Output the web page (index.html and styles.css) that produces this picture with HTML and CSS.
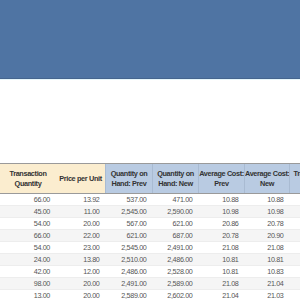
FILE: index.html
```html
<!DOCTYPE html>
<html lang="en">
<head>
    <meta charset="UTF-8">
    <title>Inventory Transactions</title>
    <link rel="stylesheet" href="styles.css">
</head>
<body>
    <div class="topbar"></div>

    <div class="grid-wrap">
        <table class="grid">
            <thead>
                <tr>
                    <th class="tx">Transaction<br>Quantity</th>
                    <th class="tx">Price per Unit</th>
                    <th class="calc">Quantity on<br>Hand: Prev</th>
                    <th class="calc">Quantity on<br>Hand: New</th>
                    <th class="calc">Average Cost:<br>Prev</th>
                    <th class="calc">Average Cost:<br>New</th>
                    <th class="calc">Transaction<br>Value</th>
                </tr>
            </thead>
            <tbody>
                <tr><td>66.00</td><td>13.92</td><td>537.00</td><td>471.00</td><td>10.88</td><td>10.88</td><td>718.08</td></tr>
                <tr><td>45.00</td><td>11.00</td><td>2,545.00</td><td>2,590.00</td><td>10.98</td><td>10.98</td><td>495.00</td></tr>
                <tr><td>54.00</td><td>20.00</td><td>567.00</td><td>621.00</td><td>20.86</td><td>20.78</td><td>1,080.00</td></tr>
                <tr><td>66.00</td><td>22.00</td><td>621.00</td><td>687.00</td><td>20.78</td><td>20.90</td><td>1,452.00</td></tr>
                <tr><td>54.00</td><td>23.00</td><td>2,545.00</td><td>2,491.00</td><td>21.08</td><td>21.08</td><td>1,242.00</td></tr>
                <tr><td>24.00</td><td>13.80</td><td>2,510.00</td><td>2,486.00</td><td>10.81</td><td>10.81</td><td>331.20</td></tr>
                <tr><td>42.00</td><td>12.00</td><td>2,486.00</td><td>2,528.00</td><td>10.81</td><td>10.83</td><td>504.00</td></tr>
                <tr><td>98.00</td><td>20.00</td><td>2,491.00</td><td>2,589.00</td><td>21.08</td><td>21.04</td><td>1,960.00</td></tr>
                <tr><td>13.00</td><td>20.00</td><td>2,589.00</td><td>2,602.00</td><td>21.04</td><td>21.03</td><td>260.00</td></tr>
            </tbody>
        </table>
    </div>
</body>
</html>
```

FILE: styles.css
```css
body {
    margin: 0;
    background-color: #ffffff;
    font-family: "Liberation Sans", Arial, sans-serif;
    overflow: hidden;
}
.topbar {
    height: 78px;
    background-color: #4f74a3;
    border-bottom: 1px solid #45658e;
    box-shadow: 0 1px 0 #e6f6fb;
}
.grid-wrap {
    margin-top: 84px;
    width: 300px;
    overflow: hidden;
}
.grid {
    border-collapse: collapse;
    table-layout: fixed;
    width: 330px;
}
.grid th {
    height: 29px;
    padding: 0;
    font-size: 7.3px;
    font-weight: bold;
    letter-spacing: -0.35px;
    color: #333333;
    text-align: center;
    line-height: 10px;
    white-space: nowrap;
    overflow: hidden;
    border-top: 1px solid #9a9a9a;
    border-bottom: 1px solid #9a9a9a;
}
.grid th.tx {
    background-color: #fbedcf;
}
.grid th.calc {
    background-color: #b9cbe2;
    border-left: 1px solid #a9bbd2;
}
.grid th:nth-child(1) { width: 56px; }
.grid th:nth-child(2) { width: 49px; }
.grid th:nth-child(3) { width: 46px; }
.grid th:nth-child(4) { width: 45px; }
.grid th:nth-child(5) { width: 45px; }
.grid th:nth-child(6) { width: 44px; }
.grid th:nth-child(7) { width: 44px; }
.grid td {
    height: 11px;
    padding: 0 6px 0 0;
    font-size: 7.2px;
    letter-spacing: -0.35px;
    color: #555555;
    text-align: right;
    line-height: 11px;
    white-space: nowrap;
    border-bottom: 1px solid #ededed;
}
.grid tbody tr:nth-child(even) td {
    background-color: #f5f5f5;
}
```
